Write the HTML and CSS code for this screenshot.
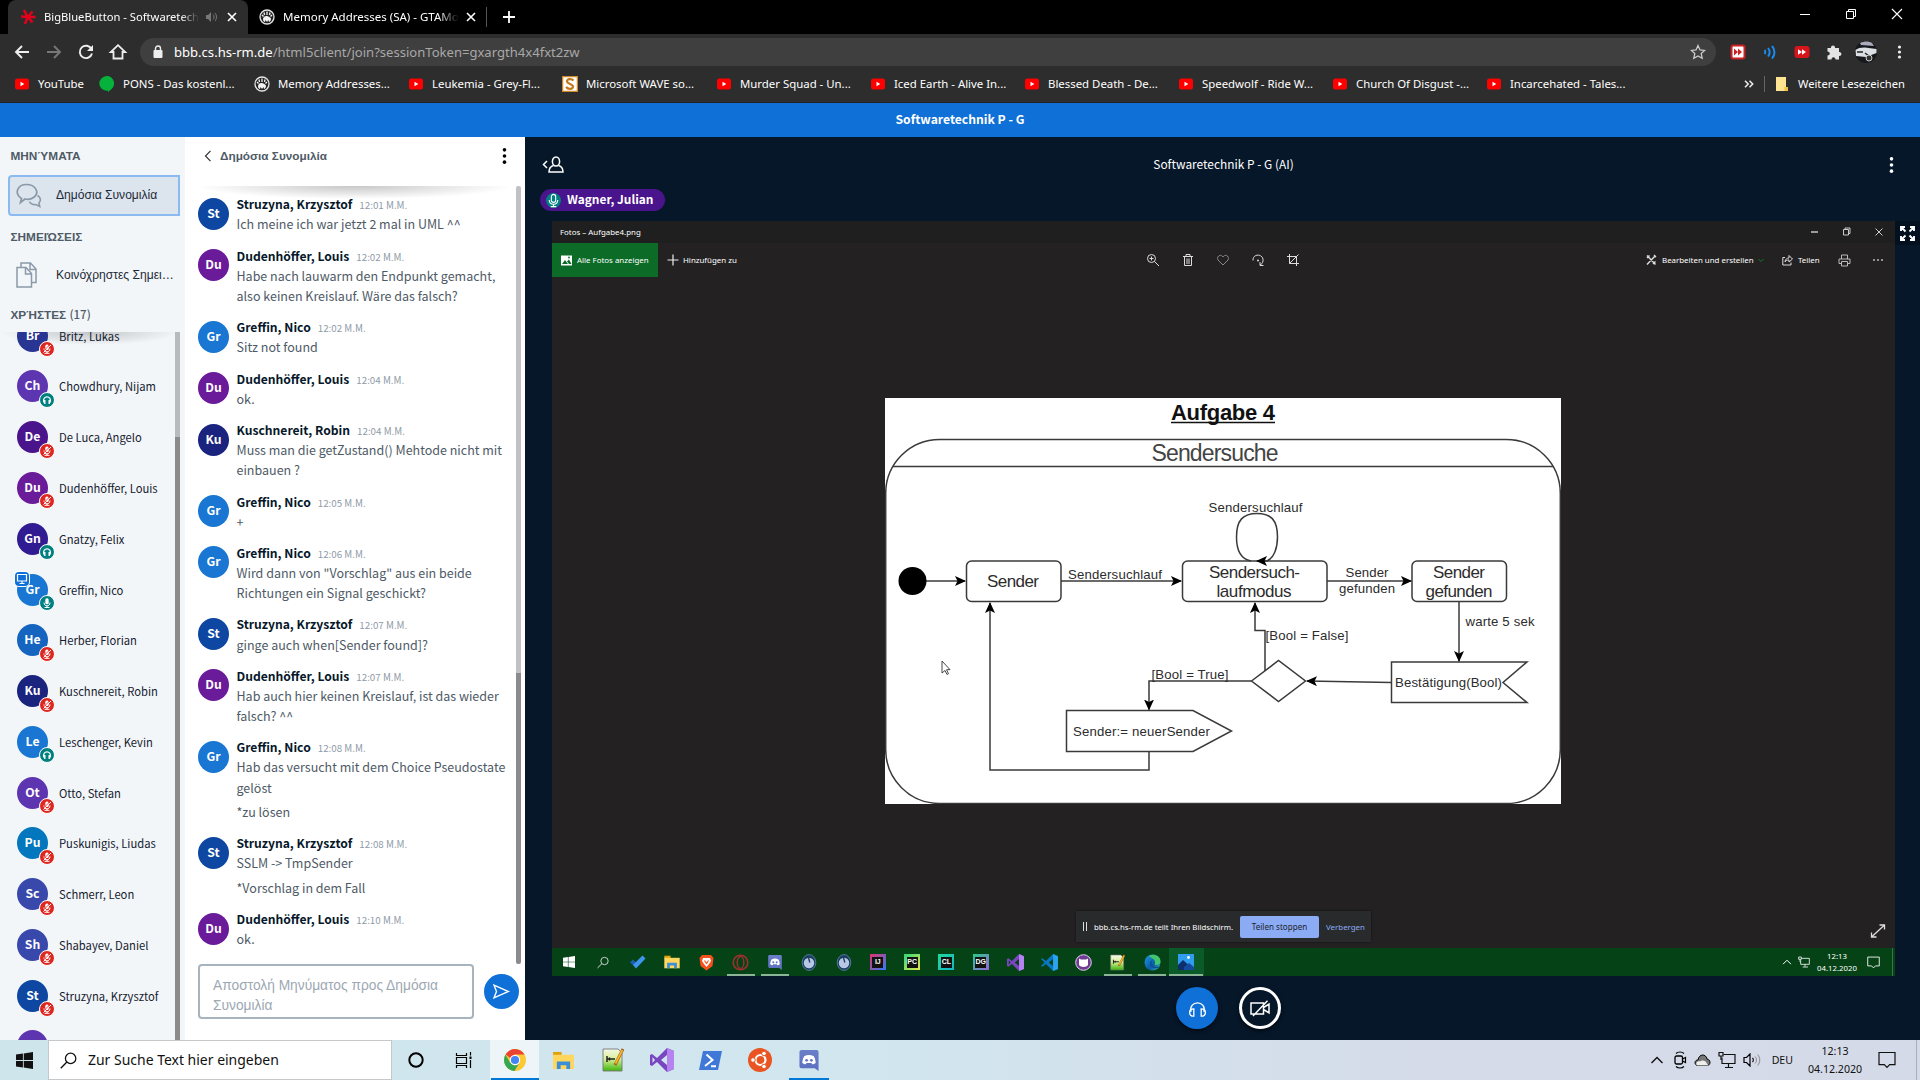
FILE: index.html
```html
<!DOCTYPE html>
<html lang="de">
<head>
<meta charset="utf-8">
<title>BigBlueButton - Softwaretechnik P - G</title>
<link rel="stylesheet" href="styles.css">
</head>
<body>
<svg class="defs" width="0" height="0">
  <defs>
    <linearGradient id="gEdge" x1="0" y1="0" x2="1" y2="1"><stop offset="0" stop-color="#1b9de2"/><stop offset=".6" stop-color="#0c59a4"/><stop offset="1" stop-color="#35c1b1"/></linearGradient>
    <linearGradient id="gNote" x1="0" y1="0" x2="0" y2="1"><stop offset="0" stop-color="#f4f8e8"/><stop offset=".45" stop-color="#d8f09a"/><stop offset="1" stop-color="#3fb50c"/></linearGradient>
    <linearGradient id="gDisc" x1="0" y1="0" x2="0" y2="1"><stop offset="0" stop-color="#6b7fc8"/><stop offset="1" stop-color="#5a6fbf"/></linearGradient>
    <marker id="arr" viewBox="0 0 11 10" refX="10" refY="5" markerWidth="11" markerHeight="10" markerUnits="userSpaceOnUse" orient="auto"><path d="M0 0L11 5L0 10L2.5 5Z"/></marker>
  </defs>
  <symbol id="yt" viewBox="0 0 16 16"><rect x="1" y="2.500" width="14" height="11" rx="2.500" fill="#f00"/><path d="M6.500 5.800v4.400L10.300 8z" fill="#fff"/></symbol>
  <symbol id="x" viewBox="0 0 16 16"><path d="M4 4l8 8M12 4l-8 8" stroke="currentColor" stroke-width="1.600"/></symbol>
  <symbol id="paw" viewBox="0 0 16 16"><circle cx="8" cy="8" r="7" fill="#222" stroke="#e4e4e4" stroke-width="1.300"/><path d="M4 10c0-2 2-3.500 4-3s4 1.500 4 3c0 2-1.500 3-2 3l-.500-2-1.500 2-1.500-2-.500 2c-1 0-2-1-2-3z" fill="#f2f2f2"/><path d="M5 3.500l.500 2.500M8 2.500V6M11 3.500L10.500 6M3 6l1.500 1.500M13 6l-1.500 1.500" stroke="#f2f2f2" stroke-width="1.300"/></symbol>
  <symbol id="muted" viewBox="0 0 16 16"><circle cx="8" cy="8" r="7.500" fill="#df2721" stroke="#fff" stroke-width="1"/><rect x="6.300" y="3.600" width="3.400" height="5.400" rx="1.600" fill="#fff"/><path d="M5 7.500c0 4.500 6 4.500 6 0M8 10.800V12.300M5.500 12.300h5" stroke="#fff" fill="none"/><path d="M4.500 11.500L12 4" stroke="#fff" stroke-width="1"/><path d="M4 10.500L11 3.500" stroke="#df2721" stroke-width=".8"/></symbol>
  <symbol id="listen" viewBox="0 0 16 16"><circle cx="8" cy="8" r="7.500" fill="#008081" stroke="#fff" stroke-width="1"/><path d="M4.800 10.500C2.500 3 13.500 3 11.200 10.500" stroke="#fff" fill="none" stroke-width="1.200"/><path d="M5 8h1.500v4H5.200zM9.500 8H11v4H9.500z" fill="#fff"/></symbol>
  <symbol id="mic" viewBox="0 0 16 16"><circle cx="8" cy="8" r="7.500" fill="#008081" stroke="#fff" stroke-width="1"/><rect x="6.300" y="3.300" width="3.400" height="6" rx="1.600" fill="#fff"/><path d="M5 7.500c0 4.500 6 4.500 6 0M8 10.800V12.500M5.500 12.500h5" stroke="#fff" fill="none"/></symbol>
  <symbol id="kebab" viewBox="0 0 6 22"><circle cx="3" cy="3.500" r="2.200"/><circle cx="3" cy="11" r="2.200"/><circle cx="3" cy="18.500" r="2.200"/></symbol>
  <symbol id="win" viewBox="0 0 16 16"><path d="M0 2.300L6.500 1.400V7.600H0zM7.300 1.300L16 0V7.600H7.300zM0 8.400h6.500v6.200L0 13.700zM7.300 8.400H16V16l-8.700-1.300z" fill="currentColor"/></symbol>
  <symbol id="search" viewBox="0 0 16 16"><circle cx="10" cy="6" r="4.900" fill="none" stroke="currentColor" stroke-width="1.200"/><path d="M6.500 9.500L.7 15.300" stroke="currentColor" stroke-width="1.300"/></symbol>
  <symbol id="folder" viewBox="0 0 22 20"><path d="M0 1h9v4H0z" fill="#e0a010"/><path d="M0 4h22v15H0z" fill="#ffd65e"/><path d="M4 11h14v8h-4v-4H8v4H4z" fill="#3a8fd6"/></symbol>
  <symbol id="discord" viewBox="0 0 20 22"><path d="M2 0h16a2 2 0 012 2v20l-4-3H2a2 2 0 01-2-2V2a2 2 0 012-2z" fill="url(#gDisc)"/><path d="M5 6.500c3-1.600 7-1.600 10 0 1.200 2 2 4.500 2 7-1.200 1-2.400 1.400-3.500 1.500l-1-1.500h-5l-1 1.500C5.400 14.900 4.200 14.500 3 13.500c0-2.500.8-5 2-7z" fill="#fff"/><circle cx="7.500" cy="10.800" r="1.500" fill="#6578c4"/><circle cx="12.500" cy="10.800" r="1.500" fill="#6578c4"/></symbol>
  <symbol id="note" viewBox="0 0 22 24"><path d="M1 1h15l4 4v18H1z" fill="url(#gNote)" stroke="#777" stroke-width=".9"/><path d="M5 8v6M5 11h8M7.500 9.500v3" stroke="#222" stroke-width="1.500"/><path d="M21 1L13 17" stroke="#a5601c" stroke-width="3"/><path d="M20.500 2L13.500 15.500" stroke="#f3b62c" stroke-width="1.800"/></symbol>
  <symbol id="vs" viewBox="0 0 24 24"><path d="M17 0l7 3v18l-7 3L7 14l-5 4-2-1V7l2-1 5 4zM17 7l-6 5 6 5zM2.500 9v6L5 12z" fill="#7a45c0" fill-rule="evenodd"/><path d="M17 0l7 3v18l-7 3z" fill="#b583f0"/></symbol>
  <symbol id="vscode" viewBox="0 0 24 24"><path d="M17 0l7 3v18l-7 3L7 14l-5 4-2-1 5-5-5-5 2-1 5 4zM17 7l-6 5 6 5z" fill="#0b77c4" fill-rule="evenodd"/><path d="M17 0l7 3v18l-7 3z" fill="#2ba3ee"/></symbol>
  <symbol id="net" viewBox="0 0 18 18"><path d="M5.500 3.500H17v9H4v-6M10.500 12.500V16M7 16.500h8" fill="none" stroke="currentColor" stroke-width="1.200"/><path d="M1 1.500h4v3.500H1zM3 5v4" fill="none" stroke="currentColor" stroke-width="1.200"/></symbol>
  <symbol id="caret" viewBox="0 0 14 14"><path d="M1.500 10L7 4.500 12.500 10" fill="none" stroke="currentColor" stroke-width="1.400"/></symbol>
  <symbol id="notif" viewBox="0 0 18 18"><path d="M1 1.500h16v12.200h-5.300L9 16.500l-2.700-2.800H1z" fill="none" stroke="currentColor" stroke-width="1.200"/></symbol>
  <symbol id="ring" viewBox="0 0 18 20"><ellipse cx="9" cy="10" rx="8" ry="9.300" fill="#1d3d5e" stroke="#5a82aa"/><circle cx="9" cy="10.500" r="6.200" fill="#b8c7e4"/><path d="M8 3l2 7" stroke="#1d3d5e" stroke-width="1.600"/></symbol>
  <symbol id="headset" viewBox="0 0 24 24"><path d="M4.500 16C1.500 2 22.500 2 19.500 16" fill="none" stroke="currentColor" stroke-width="1.500"/><path d="M7.800 12.500c-3 0-4.800 1.500-4.800 4s1.500 4.300 4.800 4.300zM16.200 12.500c3 0 4.800 1.500 4.800 4s-1.500 4.300-4.800 4.300z" fill="none" stroke="currentColor" stroke-width="1.500"/></symbol>
</svg>

<header class="browser">
  <div class="tabs">
    <div class="tab active">
      <svg width="16" height="16" viewBox="0 0 16 16"><path d="M4 1l3.500 7L5 15M1 7.500l7 .5M12.500 2.500L8 8l4.500 5.500M8 8h7.500" stroke="#e3001b" stroke-width="2.500" fill="none"/></svg>
      <span class="tab-title">BigBlueButton - Softwaretech</span>
      <svg class="dim" width="12" height="12" viewBox="0 0 12 12"><path d="M1 4h2l3-3v10L3 8H1z" fill="currentColor"/><path d="M8 3.500c1.300 1 1.300 4 0 5M10 2c2 2 2 6 0 8" fill="none" stroke="currentColor"/></svg>
      <svg class="tab-x" width="16" height="16"><use href="#x"/></svg>
    </div>
    <div class="tab second">
      <svg width="16" height="16"><use href="#paw"/></svg>
      <span class="tab-title">Memory Addresses (SA) - GTAMo</span>
      <svg class="tab-x" width="16" height="16"><use href="#x"/></svg>
    </div>
    <svg class="plus" width="14" height="14" viewBox="0 0 14 14"><path d="M7 1v12M1 7h12" stroke="#fff" stroke-width="1.800"/></svg>
    <div class="window-buttons">
      <svg width="46" height="28" viewBox="0 0 46 28"><path d="M18 14.500h10" stroke="#fff"/></svg>
      <svg width="46" height="28" viewBox="0 0 46 28"><path d="M18.500 11.500h7v7h-7zM20.500 11.500v-2h7v7h-2" fill="none" stroke="#fff"/></svg>
      <svg width="46" height="28" viewBox="0 0 46 28"><path d="M18 9l10 10M28 9L18 19" stroke="#fff" stroke-width="1.100"/></svg>
    </div>
  </div>
  <div class="toolbar">
    <svg width="32" height="16" viewBox="0 0 32 16"><path d="M23 8H10.500M16 2L10 8l6 6" fill="none" stroke="#eee" stroke-width="1.900"/></svg>
    <svg width="32" height="16" viewBox="0 0 32 16"><path d="M9 8h12.500M16 2l6 6-6 6" fill="none" stroke="#777" stroke-width="1.900"/></svg>
    <svg width="32" height="16" viewBox="0 0 32 16"><path d="M21.500 5A6.200 6.200 0 1022 9.500" fill="none" stroke="#eee" stroke-width="1.900"/><path d="M23 1v6h-6z" fill="#eee"/></svg>
    <svg width="32" height="16" viewBox="0 0 32 16"><path d="M11.500 14.500V8H8.800L16 1.200 23.200 8h-2.700v6.500z" fill="none" stroke="#eee" stroke-width="1.800"/></svg>
    <div class="address">
      <svg width="10" height="14" viewBox="0 0 10 14"><rect x="0.500" y="5" width="9" height="8" rx="1" fill="#eee"/><path d="M2.500 5.500V3.500a2.500 2.500 0 015 0v2" fill="none" stroke="#eee" stroke-width="1.400"/></svg>
      <span class="url"><b>bbb.cs.hs-rm.de</b>/html5client/join?sessionToken=gxargth4x4fxt2zw</span>
      <svg class="star" width="16" height="16" viewBox="0 0 16 16"><path d="M8 1.500l2 4.400 4.700.5-3.500 3.200 1 4.700L8 11.900l-4.200 2.400 1-4.700L1.300 6.400 6 5.900z" fill="none" stroke="#ccc" stroke-width="1.300"/></svg>
    </div>
    <div class="extensions">
      <svg width="16" height="16" viewBox="0 0 16 16"><rect x="1.500" y="1.500" width="13" height="13" rx="2" fill="#fff" stroke="#c22" stroke-width="2"/><path d="M4 4.500L8 8l-4 3.500zM8 4.500L12 8l-4 3.500z" fill="#c22"/></svg>
      <svg width="16" height="16" viewBox="0 0 16 16"><path d="M2.500 6c1 1 1 3 0 4M6 4c2 2.500 2 6 0 8.500M10 2c3.300 3.500 3.300 9 0 12.500" fill="none" stroke="#1a8cf0" stroke-width="2"/></svg>
      <svg width="16" height="16" viewBox="0 0 16 16"><rect x="0.500" y="2" width="15" height="12" rx="3" fill="#d8141c"/><path d="M4 5.300L8 8l-4 2.700zM8 5.300L12 8l-4 2.700z" fill="#fff"/></svg>
      <svg width="16" height="16" viewBox="0 0 16 16"><path d="M1.500 4H5c-.5-3.500 4.500-3.500 4 0h4v4c3.200-.3 3.200 4.300 0 4v3.500H9.500c0-3-4-3-4 0h-4V11.500c3 0 3-4 0-4z" fill="#e4e4e4"/></svg>
      <svg width="24" height="22" viewBox="0 0 24 22"><ellipse cx="12" cy="11" rx="11" ry="11" fill="#15181c"/><path d="M1.500 9c3-3 10-3 13-2l8 1v4L12 16 2 15z" fill="#dcdfe3"/><path d="M6 2c4-2 9-2 12 0l2 3-13-1z" fill="#aab"/><path d="M3 11h6M11 12l4 3" stroke="#222" stroke-width="1.500"/><circle cx="15" cy="17" r="3" fill="#333" stroke="#ccc"/></svg>
      <svg class="menu" width="5" height="16" viewBox="0 0 5 16"><g fill="#eee"><circle cx="2.500" cy="3" r="1.600"/><circle cx="2.500" cy="8" r="1.600"/><circle cx="2.500" cy="13" r="1.600"/></g></svg>
    </div>
  </div>
  <div class="bookmarks">
    <span class="bm" style="width:85px"><svg width="16" height="16"><use href="#yt"/></svg>YouTube</span>
    <span class="bm" style="width:155px"><svg width="16" height="16" viewBox="0 0 16 16"><path d="M8 0a7.500 7.500 0 014 13.500L9 16v-1.500A7.500 7.500 0 018 0z" fill="#06b23b"/><circle cx="7.500" cy="7.500" r="7.200" fill="#06b23b"/></svg>PONS - Das kostenl...</span>
    <span class="bm" style="width:154px"><svg width="16" height="16"><use href="#paw"/></svg>Memory Addresses...</span>
    <span class="bm" style="width:154px"><svg width="16" height="16"><use href="#yt"/></svg>Leukemia - Grey-Fl...</span>
    <span class="bm" style="width:154px"><svg width="16" height="16" viewBox="0 0 16 16"><rect x="0.500" y="0.500" width="15" height="15" fill="#fff" stroke="#d08a28" stroke-width="1.500"/><path d="M11.500 4.500C9 2 4.500 3 5 5.500S11.500 8 11 10.800 6 13.500 4 11" fill="none" stroke="#c07a1c" stroke-width="2.200"/></svg>Microsoft WAVE so...</span>
    <span class="bm" style="width:154px"><svg width="16" height="16"><use href="#yt"/></svg>Murder Squad - Un...</span>
    <span class="bm" style="width:154px"><svg width="16" height="16"><use href="#yt"/></svg>Iced Earth - Alive In...</span>
    <span class="bm" style="width:154px"><svg width="16" height="16"><use href="#yt"/></svg>Blessed Death - De...</span>
    <span class="bm" style="width:154px"><svg width="16" height="16"><use href="#yt"/></svg>Speedwolf - Ride W...</span>
    <span class="bm" style="width:154px"><svg width="16" height="16"><use href="#yt"/></svg>Church Of Disgust -...</span>
    <span class="bm"><svg width="16" height="16"><use href="#yt"/></svg>Incarcehated - Tales...</span>
    <span class="more"><svg width="10" height="8" viewBox="0 0 10 8"><path d="M1 .8L4.200 4 1 7.200M5.500.8L8.700 4 5.500 7.200" fill="none" stroke="#eee" stroke-width="1.500"/></svg></span>
    <span class="bm others"><svg width="16" height="16" viewBox="0 0 16 16"><path d="M2 1h10v10h2v4H2z" fill="#ffe591"/><path d="M10.500 11h3.500v4h-3.500z" fill="#f0c443"/></svg>Weitere Lesezeichen</span>
  </div>
</header>

<div class="meeting-bar">Softwaretechnik P - G</div>

<main class="app">
  <aside class="sidebar">
    <h2>ΜΗΝΎΜΑΤΑ</h2>
    <div class="side-item selected"><svg width="26" height="26" viewBox="0 0 26 26"><path d="M4.500 19.500l1-4C-2.500 10 2 1.500 10.500 1.500s14 8 7 13c-2.500 1.800-6 2-8.500 1.500z" fill="none" stroke="#8b9aa8" stroke-width="1.700"/><path d="M21.500 12.500c3 1.500 4 5 1.500 7.500l.7 3.500-3.200-1.800c-3.500.3-6-.8-7-3.200" fill="none" stroke="#8b9aa8" stroke-width="1.600"/></svg><span>Δημόσια Συνομιλία</span></div>
    <h2 class="h-notes">ΣΗΜΕΙΏΣΕΙΣ</h2>
    <div class="side-item"><svg width="22" height="26" viewBox="0 0 22 26"><path d="M1 5.500h9l5.500 6V25H1z" fill="none" stroke="#8b9aa8" stroke-width="1.500"/><path d="M9.500 5.500V12h6M5 5V1h9.500l5.500 6v13.500h-4M14 1v6.500h6" fill="none" stroke="#8b9aa8" stroke-width="1.500"/></svg><span>Κοινόχρηστες Σημει…</span></div>
    <h2 class="h-users">ΧΡΉΣΤΕΣ <i>(17)</i></h2>
    <div class="users">
      <ul>
        <li><span class="av c-britz">Br<svg><use href="#muted"/></svg></span>Britz, Lukas</li>
        <li><span class="av c-deep">Ch<svg><use href="#listen"/></svg></span>Chowdhury, Nijam</li>
        <li><span class="av c-de">De<svg><use href="#muted"/></svg></span>De Luca, Angelo</li>
        <li><span class="av c-du">Du<svg><use href="#muted"/></svg></span>Dudenhöffer, Louis</li>
        <li><span class="av c-gn">Gn<svg><use href="#listen"/></svg></span>Gnatzy, Felix</li>
        <li><span class="av c-gr presenter">Gr<svg><use href="#mic"/></svg><em><svg viewBox="0 0 14 14"><path d="M2.500 2.500h9v6.500h-9zM4.500 11.500h5M7 9v2.500" fill="none" stroke="#fff" stroke-width="1.200"/></svg></em></span>Greffin, Nico</li>
        <li><span class="av c-he">He<svg><use href="#muted"/></svg></span>Herber, Florian</li>
        <li><span class="av c-ku">Ku<svg><use href="#muted"/></svg></span>Kuschnereit, Robin</li>
        <li><span class="av c-gr">Le<svg><use href="#listen"/></svg></span>Leschenger, Kevin</li>
        <li><span class="av c-deep">Ot<svg><use href="#muted"/></svg></span>Otto, Stefan</li>
        <li><span class="av c-pu">Pu<svg><use href="#muted"/></svg></span>Puskunigis, Liudas</li>
        <li><span class="av c-sc">Sc<svg><use href="#muted"/></svg></span>Schmerr, Leon</li>
        <li><span class="av c-sc">Sh<svg><use href="#muted"/></svg></span>Shabayev, Daniel</li>
        <li><span class="av c-st">St<svg><use href="#muted"/></svg></span>Struzyna, Krzysztof</li>
        <li><span class="av c-deep"></span></li>
      </ul>
      <div class="scrollbar"></div>
    </div>
  </aside>

  <section class="chat">
    <div class="chat-head">
      <svg width="8" height="12" viewBox="0 0 8 12"><path d="M6.500.8L1.500 6l5 5.200" fill="none" stroke="#333" stroke-width="1.200"/></svg>
      <h3>Δημόσια Συνομιλία</h3>
      <svg class="chat-menu" width="5" height="18"><use href="#kebab"/></svg>
    </div>
    <div class="messages">
      <div class="list">
        <article><span class="av c-st">St</span><div><h4>Struzyna, Krzysztof<time>12:01 M.M.</time></h4><p>Ich meine ich war jetzt 2 mal in UML ^^</p></div></article>
        <article><span class="av c-du">Du</span><div><h4>Dudenhöffer, Louis<time>12:02 M.M.</time></h4><p>Habe nach lauwarm den Endpunkt gemacht,<br>also keinen Kreislauf. Wäre das falsch?</p></div></article>
        <article><span class="av c-gr">Gr</span><div><h4>Greffin, Nico<time>12:02 M.M.</time></h4><p>Sitz not found</p></div></article>
        <article><span class="av c-du">Du</span><div><h4>Dudenhöffer, Louis<time>12:04 M.M.</time></h4><p>ok.</p></div></article>
        <article><span class="av c-ku">Ku</span><div><h4>Kuschnereit, Robin<time>12:04 M.M.</time></h4><p>Muss man die getZustand() Mehtode nicht mit<br>einbauen ?</p></div></article>
        <article><span class="av c-gr">Gr</span><div><h4>Greffin, Nico<time>12:05 M.M.</time></h4><p>+</p></div></article>
        <article><span class="av c-gr">Gr</span><div><h4>Greffin, Nico<time>12:06 M.M.</time></h4><p>Wird dann von "Vorschlag" aus ein beide<br>Richtungen ein Signal geschickt?</p></div></article>
        <article><span class="av c-st">St</span><div><h4>Struzyna, Krzysztof<time>12:07 M.M.</time></h4><p>ginge auch when[Sender found]?</p></div></article>
        <article><span class="av c-du">Du</span><div><h4>Dudenhöffer, Louis<time>12:07 M.M.</time></h4><p>Hab auch hier keinen Kreislauf, ist das wieder<br>falsch? ^^</p></div></article>
        <article><span class="av c-gr">Gr</span><div><h4>Greffin, Nico<time>12:08 M.M.</time></h4><p>Hab das versucht mit dem Choice Pseudostate<br>gelöst</p><p>*zu lösen</p></div></article>
        <article><span class="av c-st">St</span><div><h4>Struzyna, Krzysztof<time>12:08 M.M.</time></h4><p>SSLM -&gt; TmpSender</p><p>*Vorschlag in dem Fall</p></div></article>
        <article><span class="av c-du">Du</span><div><h4>Dudenhöffer, Louis<time>12:10 M.M.</time></h4><p>ok.</p></div></article>
      </div>
      <div class="scrollbar"></div>
    </div>
    <div class="composer">
      <div class="field">Αποστολή Μηνύματος προς Δημόσια Συνομιλία</div>
      <div class="send"><svg width="17" height="15" viewBox="0 0 17 15"><path d="M1 1.200L15.500 7.500 1 13.800 3.500 7.500z" fill="none" stroke="#fff" stroke-width="1.400"/></svg></div>
    </div>
  </section>

  <section class="stage">
    <div class="stage-head">
      <svg width="22" height="18" viewBox="0 0 22 18"><path d="M5 5L1.500 8.500 5 12" fill="none" stroke="#fff" stroke-width="1.500"/><ellipse cx="14" cy="5.500" rx="3.600" ry="4.500" fill="none" stroke="#fff" stroke-width="1.500"/><path d="M11.500 9.500c-3 .8-4.500 3-4.500 6.500h14c0-3.500-1.500-5.700-4.500-6.500" fill="none" stroke="#fff" stroke-width="1.500"/></svg>
      <span>Softwaretechnik P - G (AI)</span>
      <svg class="white" width="5" height="18"><use href="#kebab"/></svg>
    </div>
    <div class="talking"><svg width="15" height="15" viewBox="0 0 16 16"><circle cx="8" cy="8" r="8" fill="#008081"/><rect x="5.700" y="1.500" width="4.600" height="8.500" rx="2.300" fill="none" stroke="#fff" stroke-width="1.200"/><path d="M3.500 7.500c0 6 9 6 9 0M8 12v2.500M5 14.500h6" fill="none" stroke="#fff" stroke-width="1.200"/></svg><span>Wagner, Julian</span></div>
    <div class="share-row">
      <div class="share">
        <div class="photo-title"><span>Fotos – Aufgabe4.png</span>
          <svg width="32" height="22" viewBox="0 0 32 22"><path d="M12 11h7" stroke="#ddd" stroke-width="1.300"/></svg>
          <svg width="32" height="22" viewBox="0 0 32 22"><path d="M12.500 8.500h5v5.500h-5zM14 8V7h5v5.500h-1" fill="none" stroke="#ccc"/></svg>
          <svg width="32" height="22" viewBox="0 0 32 22"><path d="M12.500 7.500l7 7M19.500 7.500l-7 7" stroke="#ccc"/></svg>
        </div>
        <div class="photo-tools">
          <div class="all"><svg width="11" height="11" viewBox="0 0 11 11"><path d="M0 .5h11v10H0z" fill="#fff"/><path d="M1 9l3-4 3 4zM6 6.500l2-2 2.500 4.500H8z" fill="#0b6b27"/><circle cx="8" cy="2.500" r=".9" fill="#0b6b27"/></svg>Alle Fotos anzeigen</div>
          <div class="add"><svg width="12" height="12" viewBox="0 0 12 12"><path d="M6 .5v11M.5 6h11" stroke="#eee" stroke-width="1.200"/></svg>Hinzufügen zu</div>
          <div class="mid">
            <svg viewBox="0 0 14 14"><circle cx="5.500" cy="5.500" r="4" fill="none" stroke="#ddd"/><path d="M8.500 8.500l4.500 4.500M3.500 5.500h4M5.500 3.500v4" stroke="#ddd"/></svg>
            <svg viewBox="0 0 14 14"><path d="M2 3.500h10M5 3V1.500h4V3M3.500 3.500v9h7v-9M6 5.500v5.500M8 5.500v5.500" fill="none" stroke="#ddd"/></svg>
            <svg viewBox="0 0 14 14"><path d="M7 12L2 7C0 4 4.500 0 7 4c2.500-4 7 0 5 3z" fill="none" stroke="#888"/></svg>
            <svg viewBox="0 0 14 14"><path d="M2 7.500C1.500 0 13 .500 12 8c-.3 2-1.500 3.500-3 4M9 9v3.500h3.500" fill="none" stroke="#ddd"/><circle cx="7" cy="7.500" r="1" fill="#ddd"/></svg>
            <svg viewBox="0 0 14 14"><path d="M3.500 1v9.500H13M1 3.500h9.500V13M3.500 10.500L12.500 1.500" fill="none" stroke="#ddd"/></svg>
          </div>
          <div class="right">
            <svg width="11" height="12" viewBox="0 0 11 12"><path d="M1 1.500l8.500 9M9.500 1.500L1 10.500M1 4l2.500-2.500M7 10l2.500-2.500M8 1l2 2" stroke="#ddd" stroke-width="1.400"/></svg><span class="w-edit">Bearbeiten und erstellen</span>
            <svg class="chev" width="6" height="5" viewBox="0 0 6 5"><path d="M.5 1L3 3.500 5.500 1" fill="none" stroke="#0c7d33"/></svg>
            <svg width="11" height="12" viewBox="0 0 11 12"><path d="M3 3.500H.8V11H9V8.500M3 8c.3-3 2-4 4-4V1.500L10.500 5 7 8V6C5 6 4 6.500 3 8z" fill="none" stroke="#ddd"/></svg><span class="w-share">Teilen</span>
            <svg class="print" width="13" height="13" viewBox="0 0 13 13"><path d="M3.500 5V1h6v4M3 9.500H1V5h11v4.500h-2M3.500 7.500h6v4.500h-6z" fill="none" stroke="#bbb"/></svg>
            <svg width="12" height="4" viewBox="0 0 12 4"><g fill="#ccc"><circle cx="2" cy="2" r=".9"/><circle cx="6" cy="2" r=".9"/><circle cx="10" cy="2" r=".9"/></g></svg>
          </div>
        </div>
        <div class="canvas">
          <svg class="diagram" width="676" height="406" viewBox="885 398 676 406" font-family="Liberation Sans, Arial, sans-serif" text-anchor="middle" fill="#2c2c2c">
            <rect x="885" y="398" width="676" height="407" fill="#fff"/>
            <g fill="none" stroke="#3a3a3a" stroke-width="1.500">
              <rect x="885.700" y="439.500" width="674.600" height="364" rx="54"/>
              <path d="M893 466.500H1553"/>
              <path d="M1251 561C1240 559 1236.500 548 1236.500 537C1236.500 520 1243 513.500 1257 513.500C1271 513.500 1277.500 520 1277.500 537C1277.500 548 1274 558 1267 561"/>
              <rect x="966.500" y="561" width="94.500" height="40.500" rx="5"/>
              <rect x="1182.500" y="561" width="144.500" height="40.500" rx="5"/>
              <rect x="1412" y="561" width="94.500" height="40.500" rx="5"/>
              <path d="M1391.500 662H1527L1503 682.500 1527 702.500H1391.500zM1251.500 681L1278.500 660.500 1305.500 681 1278.500 701.500zM1066.500 710.500H1193L1231.500 731 1193 751.500H1066.500z"/>
              <g marker-end="url(#arr)">
                <path d="M926 581H965"/><path d="M1061 581H1181"/><path d="M1327 581H1411"/><path d="M1459 601.500V661"/><path d="M1391 682.500L1307 681"/>
                <path d="M1265 671V630.500H1255V603"/><path d="M1251.500 681H1149V709.500"/><path d="M1149 751.500V770H990V603"/><path d="M1267 561H1257"/>
              </g>
            </g>
            <circle cx="912.500" cy="581" r="14" fill="#000"/>
            <text x="1223" y="419.500" font-size="22" font-weight="700" textLength="104" fill="#111">Aufgabe 4</text>
            <path d="M1171 422.500H1275" stroke="#111" stroke-width="1.500"/>
            <text x="1215" y="460.500" font-size="23" textLength="127" fill="#444">Sendersuche</text>
            <g font-size="17"><text x="1013" y="587" textLength="52">Sender</text><text x="1254.500" y="578" textLength="91">Sendersuch-</text><text x="1254" y="596.500" textLength="75">laufmodus</text><text x="1459" y="578" textLength="52">Sender</text><text x="1459" y="596.500" textLength="67">gefunden</text></g>
            <g font-size="13.200"><text x="1255.500" y="511.500" textLength="94">Sendersuchlauf</text><text x="1115" y="579" textLength="94">Sendersuchlauf</text><text x="1367" y="576.500" textLength="43">Sender</text><text x="1367" y="592.500" textLength="56">gefunden</text><text x="1500" y="626" textLength="69">warte 5 sek</text><text x="1307" y="640" textLength="83">[Bool = False]</text><text x="1190" y="679" textLength="77">[Bool = True]</text><text x="1448.500" y="687" textLength="107">Bestätigung(Bool)</text><text x="1141.500" y="735.500" textLength="137">Sender:= neuerSender</text></g>
            <path d="M942 661v12l3-2.500 2 4 1.500-.8-2-4h3.500z" fill="#fff" stroke="#333" stroke-width=".9"/>
          </svg>
          <div class="share-note">
            <svg width="4" height="9" viewBox="0 0 4 9"><path d="M.5 0v9M3.500 0v9" stroke="#ddd"/></svg>
            <span class="note-text">bbb.cs.hs-rm.de teilt Ihren Bildschirm.</span><span class="stop">Teilen stoppen</span><span class="hide">Verbergen</span>
          </div>
          <svg class="expand" width="16" height="14" viewBox="0 0 16 14"><path d="M9.500 1H14.500V5.500M14.500 1L1.500 13M1.500 8.500V13H6.500" fill="none" stroke="#ddd" stroke-width="1.300"/></svg>
        </div>
        <div class="green-bar">
          <span><svg width="12" height="12" style="color:#fff"><use href="#win"/></svg></span>
          <span><svg width="12" height="13" style="color:#ddd"><use href="#search"/></svg></span>
          <span><svg width="17" height="14" viewBox="0 0 17 14"><path d="M1 7.500L4 4.500 7 7.500 4.500 10.500z" fill="#1c5fb8"/><path d="M4 10L13.500.5 16.500 3.500 7 13.500z" fill="#3f94f0"/></svg></span>
          <span><svg width="16" height="14"><use href="#folder"/></svg></span>
          <span><svg width="15" height="17" viewBox="0 0 15 17"><path d="M3 1h9l2.500 3-1 8L7.500 16.500 1.500 12l-1-8z" fill="#f4511e"/><path d="M4 4h7l1 3-2 3-2.500 3L5 10 3 7z" fill="#fff"/><path d="M5.500 6.500l2 3 2-3" fill="none" stroke="#f4511e" stroke-width="1.200"/></svg></span>
          <span class="run"><svg width="17" height="17" viewBox="0 0 17 17"><circle cx="8.500" cy="8.500" r="7.300" fill="none" stroke="#9c3030" stroke-width="1.600"/><ellipse cx="8.500" cy="8.500" rx="3.300" ry="6" fill="none" stroke="#9c3030" stroke-width="1.400"/></svg></span>
          <span class="run"><svg width="14" height="15"><use href="#discord"/></svg></span>
          <span><svg width="16" height="17"><use href="#ring"/></svg></span>
          <span><svg width="16" height="17"><use href="#ring"/></svg></span>
          <span class="jb" style="--a:#e5316c;--b:#2f7df6">IJ</span>
          <span class="jb" style="--a:#2bd67b;--b:#e9e84a">PC</span>
          <span class="jb" style="--a:#1fd99a;--b:#17b6c8">CL</span>
          <span class="jb" style="--a:#22cf86;--b:#9a62e0">DG</span>
          <span><svg width="17" height="17"><use href="#vs"/></svg></span>
          <span><svg width="17" height="17"><use href="#vscode"/></svg></span>
          <span><svg width="17" height="17" viewBox="0 0 17 17"><circle cx="8.500" cy="8.500" r="7.800" fill="#6f3b93" stroke="#ded3e8"/><path d="M4 4.500l2 1h5l2-1v6.500c-1.500 2.500-7.500 2.500-9 0z" fill="#fff"/></svg></span>
          <span class="run"><svg width="15" height="17"><use href="#note"/></svg></span>
          <span class="run"><svg width="17" height="17" viewBox="0 0 17 17"><circle cx="8.500" cy="8.500" r="8" fill="url(#gEdge)"/><path d="M5 2C10-1 17 2 16.500 8c-.3 3-4 3.500-6 2.500 1-2 .5-5-2-6C7 3.500 5.500 3 5 2z" fill="#43c66b"/><path d="M7.500 7c-2.500 4 2 8 7 6" fill="none" stroke="#0a4b92" stroke-width="1.300"/></svg></span>
          <span class="run current"><svg width="16" height="16" viewBox="0 0 16 16"><path d="M0 0h16v16H0z" fill="#2f9cf0"/><path d="M0 11l5-5 11 10H0z" fill="#0d2f6c"/><path d="M6 13l5-4 5 4v3H6z" fill="#164a9c"/><circle cx="10.500" cy="3.500" r="1.400" fill="#fff"/></svg></span>
          <div class="tray"><svg width="10" height="10"><use href="#caret"/></svg><svg width="12" height="12"><use href="#net"/></svg><div class="clock">12:13<br>04.12.2020</div><svg width="13" height="13"><use href="#notif"/></svg><i></i></div>
        </div>
      </div>
      <div class="full"><svg width="15" height="15" viewBox="0 0 15 15"><path d="M1 5V1h4M1 1l4.500 4.500M10 1h4v4M14 1L9.500 5.500M1 10v4h4M1 14l4.500-4.500M14 10v4h-4M14 14L9.500 9.500" fill="none" stroke="#fff" stroke-width="1.900"/></svg></div>
    </div>
    <div class="actions">
      <div class="round blue"><svg width="23" height="21" viewBox="0 0 24 24"><use href="#headset"/></svg></div>
      <div class="round ghost"><svg width="20" height="17" viewBox="0 0 20 17"><path d="M1 3h12.500v11H1zM13.500 7.500L19 4v9l-5.500-3.500M3 16L17.500.8" fill="none" stroke="#fff" stroke-width="1.500"/></svg></div>
    </div>
  </section>
</main>

<footer class="taskbar">
  <div class="start"><svg width="17" height="17"><use href="#win"/></svg></div>
  <div class="search"><svg width="17" height="17"><use href="#search"/></svg>Zur Suche Text hier eingeben</div>
  <div class="task"><svg width="16" height="16" viewBox="0 0 16 16"><circle cx="8" cy="8" r="6.700" fill="none" stroke="#000" stroke-width="2"/></svg></div>
  <div class="task"><svg width="18" height="16" viewBox="0 0 18 16"><path d="M1.500 1v2.500h10V1M1.500 5.500h10v6h-10zM1.500 16v-2.500h10V16M15.500 0v3.500M15.500 8v8" fill="none" stroke="#000" stroke-width="1.200"/><path d="M14.500 4.500h2v2.500h-2z"/></svg></div>
  <div class="app-tile open active-tile"><svg width="22" height="22" viewBox="0 0 22 22"><circle cx="11" cy="11" r="11" fill="#fcc934"/><path d="M1.700 5.300A11 11 0 0120.500 5.500H11L6 9z" fill="#ea4335"/><path d="M1.500 5.500A11 11 0 0010.500 22l4.500-7.500-4 2-5-3z" fill="#34a853"/><circle cx="11" cy="11" r="5.200" fill="#fff"/><circle cx="11" cy="11" r="4.100" fill="#4285f4"/></svg></div>
  <div class="app-tile"><svg width="21" height="19"><use href="#folder"/></svg></div>
  <div class="app-tile"><svg width="22" height="24"><use href="#note"/></svg></div>
  <div class="app-tile"><svg width="24" height="24"><use href="#vs"/></svg></div>
  <div class="app-tile"><svg width="23" height="19" viewBox="0 0 23 19"><path d="M4 0h19l-4 19H0z" fill="#3f78d6"/><path d="M7.500 3.500l6 5.500-7.500 6M12 15.200h5" fill="none" stroke="#fff" stroke-width="2"/></svg></div>
  <div class="app-tile"><svg width="24" height="24" viewBox="0 0 24 24"><circle cx="12" cy="12" r="12" fill="#e95420"/><circle cx="12.500" cy="12" r="5" fill="none" stroke="#fff" stroke-width="2.200"/><g fill="#fff" stroke="#e95420"><circle cx="5" cy="12" r="2.300"/><circle cx="16" cy="5.500" r="2.300"/><circle cx="16" cy="18.500" r="2.300"/></g></svg></div>
  <div class="app-tile open"><svg width="20" height="21"><use href="#discord"/></svg></div>
  <div class="tray">
    <svg class="up" width="14" height="14"><use href="#caret"/></svg>
    <svg width="13" height="18" viewBox="0 0 13 18"><rect x="1" y="5" width="7.500" height="8" rx="1.500" fill="none" stroke="#000" stroke-width="1.300"/><path d="M8.500 8l3-1.500v5l-3-1.500M2 2.500C4 .5 8 .5 10 2.500M2 15.500c2 2 6 2 8 0" fill="none" stroke="#000" stroke-width="1.200"/></svg>
    <svg width="17" height="13" viewBox="0 0 17 13"><path d="M3 11.500C0 10 .5 6 4 6 5-.5 12-.5 13 5c4 .5 4 6.500 0 6.500z" fill="#777" stroke="#000"/><path d="M3 11.500C1 9 4 6.500 6 7.500c2-2 6-1 6.500 1.500l2 2.500z" fill="#eee"/></svg>
    <svg width="18" height="18"><use href="#net"/></svg>
    <svg width="18" height="14" viewBox="0 0 18 14"><path d="M1 4.500h2.500L7 1v12L3.500 9.500H1zM9.500 5c1 1 1 3 0 4" fill="none" stroke="#000" stroke-width="1.200"/><path d="M12 3.500c2 2 2 5 0 7M14.500 1.500c3 3 3 8 0 11" fill="none" stroke="#888"/></svg>
    <span class="lang">DEU</span>
    <div class="clock">12:13<br>04.12.2020</div>
    <svg width="18" height="18"><use href="#notif"/></svg>
    <i></i>
  </div>
</footer>
</body>
</html>
```
FILE: styles.css
```css
* { box-sizing: border-box; }
body { margin: 0; width: 1920px; height: 1080px; overflow: hidden; display: flex; flex-direction: column; background: #06172a; font: 11.400px/16px "Noto Sans", "Open Sans", sans-serif; }
svg { flex: none; display: block; }
h2, h3, h4, p, ul { margin: 0; padding: 0; }
.defs { position: absolute; }

/* browser */
.browser { height: 103px; flex: none; background: #2d2d2d; color: #fff; border-bottom: 1px solid #222; }
.tabs { height: 34px; background: #000; display: flex; align-items: center; padding-left: 8px; }
.tab { display: flex; align-items: center; height: 34px; padding-left: 12px; }
.tab.active { width: 240px; background: #2d2d2d; border-radius: 8px 8px 0 0; }
.tab.second { width: 239px; height: 20px; padding-left: 11px; border-right: 1px solid #555; }
.tab-title { width: 155px; margin-left: 8px; overflow: hidden; white-space: nowrap; -webkit-mask-image: linear-gradient(90deg, #000 88%, transparent); mask-image: linear-gradient(90deg, #000 88%, transparent); }
.second .tab-title { width: 176px; font-size: 11.500px; }
.active .tab-title { font-size: 11.200px; }
.dim { color: #777; margin-left: 6px; }
.active .tab-x { margin-left: 7px; }
.second .tab-x { margin-left: 4px; }
.plus { margin-left: 15px; }
.window-buttons { margin-left: auto; display: flex; align-self: flex-start; }
.toolbar { height: 36px; display: flex; align-items: center; padding-left: 6px; }
.address { width: 1576px; height: 28px; margin-left: 6px; border-radius: 14px; background: #3f3f3f; display: flex; align-items: center; padding-left: 13px; color: #a8a8a8; font-size: 13.070px; }
.url { margin-left: 11px; }
.url b { font-weight: 400; color: #fff; }
.star { margin-left: auto; margin-right: 10px; }
.extensions { display: flex; align-items: center; gap: 16px; margin-left: 14px; }
.extensions svg:nth-child(5) { margin-left: -4px; }
.extensions .menu { margin-left: 3px; }
.bookmarks { height: 28px; display: flex; align-items: center; padding-left: 14px; white-space: nowrap; }
.bm { display: flex; align-items: center; gap: 8px; flex: none; }
.more { margin-left: auto; padding-right: 10px; border-right: 1px solid #666; height: 16px; display: flex; align-items: center; }
.others { margin-left: 9px; padding-right: 15px; font-size: 11.200px; }

/* meeting */
.meeting-bar { height: 34px; flex: none; background: #0f70d7; color: #fff; text-align: center; font: 700 12.160px/32px "Noto Sans CJK JP", sans-serif; }
.app { height: 903px; flex: none; display: flex; font-family: "Noto Sans CJK JP", "Noto Sans", sans-serif; }
.sidebar { width: 185px; background: #f3f6f9; display: flex; flex-direction: column; }
.sidebar h2 { height: 16px; font: 700 11.800px/16px "Liberation Sans", sans-serif; color: #4e5a66; margin: 11px 0 0 10.500px; }
.sidebar h2 i { font: 500 11.500px/14px "Noto Sans CJK JP", sans-serif; }
.side-item { height: 41px; margin: 11px 5px 0 8px; display: flex; align-items: center; color: #1c2a38; font: 12.100px/18px "Liberation Sans", sans-serif; padding-left: 8px; white-space: nowrap; }
.side-item span { margin-left: 15px; }
.side-item.selected { border: 2px solid #8abaf0; border-radius: 4px 0 0 4px; background: #dce4ed; padding-left: 6px; }
.side-item.selected span { margin-left: 14px; padding-bottom: 2px; }
.sidebar .h-notes { margin-top: 13px; }
.h-notes + .side-item { margin-top: 9px; }
.h-notes + .side-item span { margin-left: 18px; }
.h-notes + .side-item + h2 { margin-top: 12px; }
.users { flex: 1; overflow: hidden; margin-top: 9px; display: flex; justify-content: space-between; padding-right: 5px; background: radial-gradient(farthest-side at 50% 0, rgba(0,0,0,.2), transparent) 0 0/180px 13px no-repeat; }
.users ul { list-style: none; margin-top: -21.700px; }
.users li { height: 50.770px; display: flex; align-items: center; gap: 11px; padding-left: 17px; font-size: 11.230px; color: #14202e; white-space: nowrap; }
.scrollbar { width: 5px; height: 100%; flex: none; }
.users .scrollbar { background: linear-gradient(#b8babd 105px, #8b8b8b 105px); }
.av { width: 31px; height: 32px; flex: none; border-radius: 50%; color: #fff; text-align: center; font-size: 12.200px; font-weight: 700; line-height: 30px; position: relative; }
.av > svg { position: absolute; width: 16px; height: 16px; left: 21.500px; top: 21.500px; }
.av em { position: absolute; left: -2px; top: -2px; width: 14px; height: 14px; border-radius: 4px; background: #0f70d7; box-shadow: 0 0 0 1px #fff; }
.c-britz { background: #283593; } .c-deep { background: #5e35b1; } .c-de { background: #4a148c; } .c-du { background: #6a1b9a; }
.c-gn { background: #311b92; } .c-gr { background: #1976d2; } .c-he { background: #1565c0; } .c-ku { background: #1a237e; }
.c-pu { background: #0277bd; } .c-sc { background: #3949ab; } .c-st { background: #0d47a1; }

.chat { width: 340px; background: #fff; display: flex; flex-direction: column; }
.chat-head { height: 49px; display: flex; align-items: center; padding: 0 18px 12px 19px; }
.chat-head h3 { font: 700 11.780px/18px "Liberation Sans", sans-serif; color: #4e5a66; margin-left: 8px; }
.chat-menu { margin-left: auto; }
.messages { height: 778px; display: flex; justify-content: space-between; padding: 0 4px 0 13px; background: radial-gradient(farthest-side at 50% 0, rgba(0,0,0,.22), transparent) 12px 0/315px 13px no-repeat; }
.list { padding-top: 8.300px; }
article { display: flex; margin-bottom: 11.220px; color: #4e5a66; font-size: 12.510px; line-height: 20.100px; white-space: nowrap; }
article .av { margin-top: 3.500px; margin-right: 7.500px; }
article h4 { height: 20.100px; font-size: 12.150px; font-weight: 700; color: #06172a; }
article time { font-size: 9.790px; font-weight: 400; color: #8f9ba8; margin-left: 7px; line-height: 14px; }
article p + p { margin-top: 4.400px; }
.messages .scrollbar { background: linear-gradient(#c1c1c1 487px, #8b8b8b 487px); border-radius: 2px; }
.composer { display: flex; align-items: center; padding: 0 6px 0 13px; justify-content: space-between; }
.field { width: 276px; height: 55px; border: 2px solid #a7b3bd; border-radius: 4px; padding: 10px 13px 8px; color: #9da8b3; font: 13.780px/20px "Liberation Sans", sans-serif; }
.send { width: 35px; height: 35px; border-radius: 50%; background: #0f70d7; display: flex; align-items: center; justify-content: center; }

.stage { flex: 1; color: #fff; }
.stage-head { height: 52px; display: flex; align-items: center; justify-content: space-between; padding: 3px 26px 0 17px; font-size: 11.920px; }
.stage-head span { margin: -2px 6px 0 0; }
.white { fill: #fff; }
.talking { display: inline-flex; align-items: center; gap: 6px; margin-left: 15px; height: 22px; width: 125px; border-radius: 11px; background: #4a148c; font-size: 11.910px; font-weight: 700; line-height: 20px; padding-left: 6px; vertical-align: top; white-space: nowrap; }
.talking span { padding-bottom: 2px; }
.share-row { display: flex; margin: 10px 0 0 27px; }
.share { width: 1343px; height: 755px; background: #232122; font: 7.900px/12px "Noto Sans", sans-serif; display: flex; flex-direction: column; }
.photo-title { height: 22px; background: #1f1f1f; display: flex; align-items: center; padding: 0 0 0 8px; }
.photo-title span { margin-right: auto; }
.photo-tools { height: 34px; display: flex; align-items: center; }
.all { width: 106px; height: 34px; background: #0b6b27; display: flex; align-items: center; gap: 5px; padding-left: 9px; }
.add { display: flex; align-items: center; gap: 4px; width: 485px; padding-left: 9px; }
.mid { display: flex; gap: 21px; margin-left: 3px; }
.mid svg { width: 14px; height: 14px; }
.right { margin-left: auto; display: flex; align-items: center; padding-right: 11px; }
.w-edit { margin-left: 5px; width: 92px; white-space: nowrap; }
.chev { margin: 0 18px 0 4px; }
.w-share { margin-left: 5px; width: 22px; }
.print { margin: 0 21px 0 18px; }
.canvas { height: 671px; padding: 121px 0 0 333px; position: relative; }
.share-note { position: absolute; left: 524px; top: 634px; width: 295px; height: 31px; background: #282a2c; box-shadow: 0 0 2px #111; display: flex; align-items: center; padding-left: 7px; }
.note-text { margin-left: 7px; width: 146px; font-size: 7.780px; white-space: nowrap; }
.stop { width: 79px; height: 22px; border-radius: 2px; background: #8cabf5; color: #20242c; text-align: center; line-height: 22px; font-size: 8.080px; }
.hide { margin-left: 7px; color: #8cabf5; }
.expand { position: absolute; left: 1318px; top: 647px; }
.green-bar { height: 28px; background: #054316; display: flex; align-items: center; }
.green-bar > span { width: 34.300px; height: 28px; display: flex; align-items: center; justify-content: center; }
.run { background: linear-gradient(#8cb497, #8cb497) 50% 100%/28px 2px no-repeat; }
.green-bar .current { background: linear-gradient(#8cb497, #8cb497) 50% 100%/34px 2px no-repeat, #0b5a2a; }
.green-bar .jb { font: 700 7px/12px "Liberation Sans", sans-serif; color: #fff; background: linear-gradient(#111, #111) 50% 50%/11px 11px no-repeat, linear-gradient(135deg, var(--a), var(--b)) 50% 50%/16px 16px no-repeat; }
.green-bar .tray { font-size: 7.800px; line-height: 12.500px; gap: 6px; }
.tray { margin-left: auto; display: flex; align-items: center; height: 100%; }
.clock { text-align: center; }
.green-bar .clock { width: 42px; }
.green-bar .clock + svg { margin-left: 3px; }
.green-bar .tray i { width: 1px; height: 28px; background: #3d7349; margin: 0 2px 0 6px; }
.full { width: 25px; height: 24px; background: #031020; display: flex; align-items: center; justify-content: center; }
.actions { display: flex; justify-content: center; gap: 21px; padding-top: 11px; margin-left: 12px; }
.round { width: 42px; height: 42px; border-radius: 50%; display: flex; align-items: center; justify-content: center; box-shadow: 0 2px 4px rgba(0,0,0,.6); }
.blue { background: #0f70d7; }
.ghost { border: 3px solid #fff; }

/* taskbar */
.taskbar { height: 40px; flex: none; display: flex; background: linear-gradient(90deg, #cfe5ec, #d1e6ee 45%, #d5dbe9 75%, #d5dae8); color: #111; }
.taskbar > div { display: flex; align-items: center; justify-content: center; }
.start { width: 48px; }
.taskbar .search { width: 344px; background: #fff; border: 1px solid #c4c8ca; justify-content: flex-start; padding-left: 11px; gap: 11px; font-size: 13.980px; }
.task { width: 48px; }
.task + .task { width: 48px; margin-right: 2px; }
.app-tile { width: 49px; }
.open { background: linear-gradient(#0078d7, #0078d7) 50% 100%/40px 2px no-repeat; }
.active-tile { background: linear-gradient(#0078d7, #0078d7) 50% 100%/48px 2px no-repeat, #edf5f8; }
.taskbar .tray { margin-left: auto; line-height: 18px; font-size: 10.600px; gap: 7px; }
.up { margin-right: 3px; }
.lang { margin-left: 4px; }
.taskbar .clock { width: 60px; margin: 0 0 0 5px; }
.taskbar .clock + svg { margin-left: 6px; }
.tray i { width: 1px; height: 40px; background: #a9b0bb; margin: 0 3px 0 13px; }
```
